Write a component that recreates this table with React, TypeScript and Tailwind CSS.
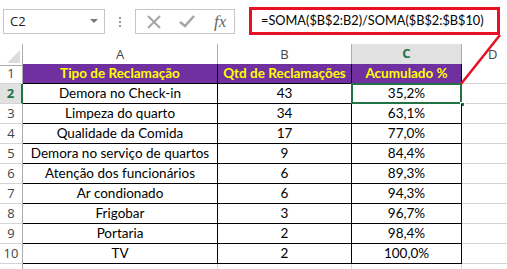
import React from 'react';

const cols = 'grid grid-cols-[23px_195px_134px_110px_62px]';
const cellFont = { fontFamily: 'Lato, "Open Sans", sans-serif' };
const uiFont = { fontFamily: '"Open Sans", "Noto Sans", sans-serif' };

const rows = [
  { tipo: 'Demora no Check-in', qtd: '43', acc: '35,2%' },
  { tipo: 'Limpeza do quarto', qtd: '34', acc: '63,1%' },
  { tipo: 'Qualidade da Comida', qtd: '17', acc: '77,0%' },
  { tipo: 'Demora no serviço de quartos', qtd: '9', acc: '84,4%' },
  { tipo: 'Atenção dos funcionários', qtd: '6', acc: '89,3%' },
  { tipo: 'Ar condionado', qtd: '6', acc: '94,3%' },
  { tipo: 'Frigobar', qtd: '3', acc: '96,7%' },
  { tipo: 'Portaria', qtd: '2', acc: '98,4%' },
  { tipo: 'TV', qtd: '2', acc: '100,0%' },
];

const RowHead: React.FC<{ n: number; active?: boolean }> = ({ n, active }) => (
  <div
    className={
      'h-5 flex items-center justify-center text-[13px] border-b border-[#d4d4d4] ' +
      (active
        ? 'bg-[#e1e1e1] text-[#217346] font-bold border-r-2 border-r-[#217346]'
        : 'bg-white text-[#444] border-r border-r-[#ababab]')
    }
    style={uiFont}
  >
    {n}
  </div>
);

const Cell: React.FC<{ children?: React.ReactNode; head?: boolean }> = ({ children, head }) => (
  <div
    className={
      'h-5 flex items-center justify-center whitespace-nowrap text-[13.5px] leading-none border-r border-b border-black pt-px ' +
      (head ? 'bg-[#7030a0] text-[#ffff00] font-bold' : 'bg-white text-black')
    }
    style={cellFont}
  >
    {children}
  </div>
);

const Blank: React.FC = () => <div className="h-5 border-r border-b border-[#d4d4d4] bg-white" />;

export default function App() {
  return (
    <div className="relative w-[507px] h-[269px] overflow-hidden bg-white">
      {/* formula bar */}
      <div className="h-11 flex items-start pt-[9px] pl-[3px]">
        <div className="w-[102px] h-[25px] border border-[#c6c6c6] flex items-center justify-between pl-[6px] pr-[6px]">
          <span className="text-[13px] text-[#222]" style={uiFont}>C2</span>
          <svg width="8" height="5" viewBox="0 0 8 5"><path d="M0 0h8L4 4z" fill="#777" /></svg>
        </div>
        <div className="w-[30px] h-[25px] flex flex-col items-center justify-center gap-[2px]">
          <span className="w-[2px] h-[2px] bg-[#9a9a9a]" />
          <span className="w-[2px] h-[2px] bg-[#9a9a9a]" />
          <span className="w-[2px] h-[2px] bg-[#9a9a9a]" />
        </div>
        <div className="w-[100px] h-[25px] border border-[#c6c6c6] flex items-center pl-[11px]">
          <svg width="14" height="14" viewBox="0 0 14 14"><path d="M1 1L13 13M13 1L1 13" stroke="#a6a6a6" strokeWidth="2" /></svg>
          <svg className="ml-[18px]" width="16" height="13" viewBox="0 0 16 13"><path d="M1 7L6 11L15 1" stroke="#a6a6a6" strokeWidth="2.6" fill="none" /></svg>
          <span className="ml-[19px] text-[17px] italic text-[#666]" style={{ fontFamily: '"Liberation Serif", serif' }}>fx</span>
        </div>
        <div className="ml-[14px] -mt-[2px] w-[251px] h-[28px] border-[3px] border-[#e81123] flex items-center pl-[9px]">
          <span className="text-[12.75px] whitespace-nowrap text-black" style={cellFont}>=SOMA($B$2:B2)/SOMA($B$2:$B$10)</span>
        </div>
      </div>

      {/* column headers */}
      <div className={cols + ' h-5 text-[13px] text-[#444]'} style={uiFont}>
        <div className="relative border-r border-b border-[#ababab]">
          <svg className="absolute right-[2px] bottom-[2px]" width="13" height="13" viewBox="0 0 13 13"><path d="M13 0V13H0z" fill="#dcdcdc" /></svg>
        </div>
        <div className="flex items-center justify-center border-r border-b border-[#ababab]">A</div>
        <div className="flex items-center justify-center border-r border-b border-[#ababab]">B</div>
        <div className="flex items-center justify-center bg-[#e1e1e1] border-r border-[#ababab] border-b-2 border-b-[#217346] text-[#217346] font-bold">C</div>
        <div className="flex items-center justify-start pl-[26px] border-r border-b border-[#ababab]">D</div>
      </div>

      {/* header row */}
      <div className={cols}>
        <RowHead n={1} />
        <Cell head>Tipo de Reclamação</Cell>
        <Cell head>Qtd de Reclamações</Cell>
        <Cell head>Acumulado %</Cell>
        <Blank />
      </div>

      {rows.map((r, i) => (
        <div key={i} className={cols}>
          <RowHead n={i + 2} active={i === 0} />
          <Cell>{r.tipo}</Cell>
          <Cell>{r.qtd}</Cell>
          <div className="relative">
            <Cell>{r.acc}</Cell>
            {i === 0 && (
              <>
                <div className="absolute -left-px -top-px w-[111px] h-[21px] border-2 border-[#217346]" />
                <div className="absolute -right-[3px] -bottom-[3px] w-[5px] h-[5px] bg-[#217346] border border-white" />
              </>
            )}
          </div>
          <Blank />
        </div>
      ))}

      <div className={cols}>
        <div className="h-5 border-r border-[#ababab]" />
        <Blank />
        <Blank />
        <Blank />
        <Blank />
      </div>

      {/* callout line */}
      <svg className="absolute left-0 top-0 pointer-events-none" width="507" height="269">
        <line x1="500" y1="35" x2="461" y2="84" stroke="#e81123" strokeWidth="2.5" />
      </svg>
    </div>
  );
}
